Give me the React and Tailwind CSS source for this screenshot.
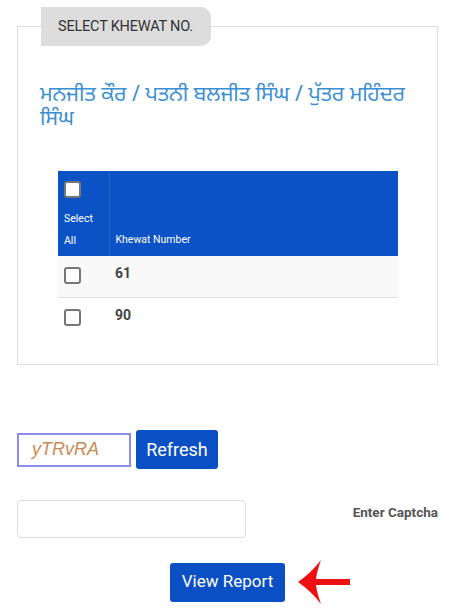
import React from 'react';

const Box = ({ className = '' }) => (
  <span className={`block w-[17px] h-[17px] rounded-[3px] bg-white border-2 border-[#767676] ${className}`} />
);

const App = () => {
  const rows = ['61', '90'];

  return (
    <div className="w-[450px] h-[611px] bg-white overflow-hidden font-['Roboto',sans-serif] text-[#333]">
      {/* Khewat panel */}
      <div className="relative ml-[17px] w-[421px] mt-[26px] h-[339px] border border-[#dedede]">
        <div className="absolute left-[23px] top-[-20px] h-[39px] w-[170px] bg-[#dddddd] rounded-tr-[10px] rounded-br-[10px] flex items-center pl-[17px] text-[14.5px] text-[#333] tracking-[-0.2px]">
          SELECT KHEWAT NO.
        </div>

        <h2 className="pt-[54px] pl-[22px] pr-4 text-[21px] leading-[24px] text-[#3a8fd2] font-['Noto_Sans','Noto_Sans_Gurmukhi',sans-serif]">
          ਮਨਜੀਤ ਕੌਰ / ਪਤਨੀ ਬਲਜੀਤ ਸਿੰਘ / ਪੁੱਤਰ ਮਹਿੰਦਰ ਸਿੰਘ
        </h2>

        <table className="mt-[42px] ml-[40px] w-[340px] border-collapse">
          <thead>
            <tr className="bg-[#0b52c6] text-white text-[10.5px]">
              <th className="w-[51px] h-[85px] align-top text-left font-normal pl-[6px] pt-[10px] border-r border-[#2a63c9]">
                <Box className="border-[#9aa9c8]" />
                <div className="mt-[10px] leading-[22px]">Select<br />All</div>
              </th>
              <th className="align-bottom text-left font-normal pl-[6px] pb-[8px]">Khewat Number</th>
            </tr>
          </thead>
          <tbody>
            {rows.map((r, i) => (
              <tr key={r} className={i === 0 ? 'bg-[#f9f9f9] border-b border-[#dddddd]' : 'bg-white'}>
                <td className="h-[41px] pl-[6px] align-top pt-[11px]">
                  <Box />
                </td>
                <td className="pl-[6px] align-top pt-[7px] text-[14px] font-bold text-[#444]">{r}</td>
              </tr>
            ))}
          </tbody>
        </table>
      </div>

      {/* Captcha */}
      <div className="flex items-center gap-[5px] ml-[17px] mt-[65px]">
        <div className="w-[114px] h-[34px] border-2 border-[#8a8af0] flex items-center pl-[13px] italic text-[18px] text-[#c98a55] font-['Liberation_Sans',sans-serif]">
          yTRvRA
        </div>
        <button className="h-[39px] w-[82px] rounded-[3px] bg-[#0b4fc4] text-white text-[18px]">Refresh</button>
      </div>

      <div className="flex items-start justify-between mt-[31px] ml-[17px] mr-[12px]">
        <input className="w-[229px] h-[38px] border border-[#dddddd] rounded-[4px] outline-none" />
        <span className="mt-[2px] text-[13.5px] font-bold text-[#555]">Enter Captcha</span>
      </div>

      <div className="flex items-center mt-[21px] ml-[170px] gap-[12px]">
        <button className="h-[39px] w-[115px] rounded-[3px] bg-[#0b4fc4] text-white text-[17px]">View Report</button>
        <svg width="54" height="46" viewBox="0 0 54 46">
          <path d="M1 23 Q14 14 24 1 Q20 12 19 20 L53 20 L53 26 L19 26 Q20 34 24 45 Q14 32 1 23 Z" fill="#ee1111" />
        </svg>
      </div>
    </div>
  );
};

export default App;
